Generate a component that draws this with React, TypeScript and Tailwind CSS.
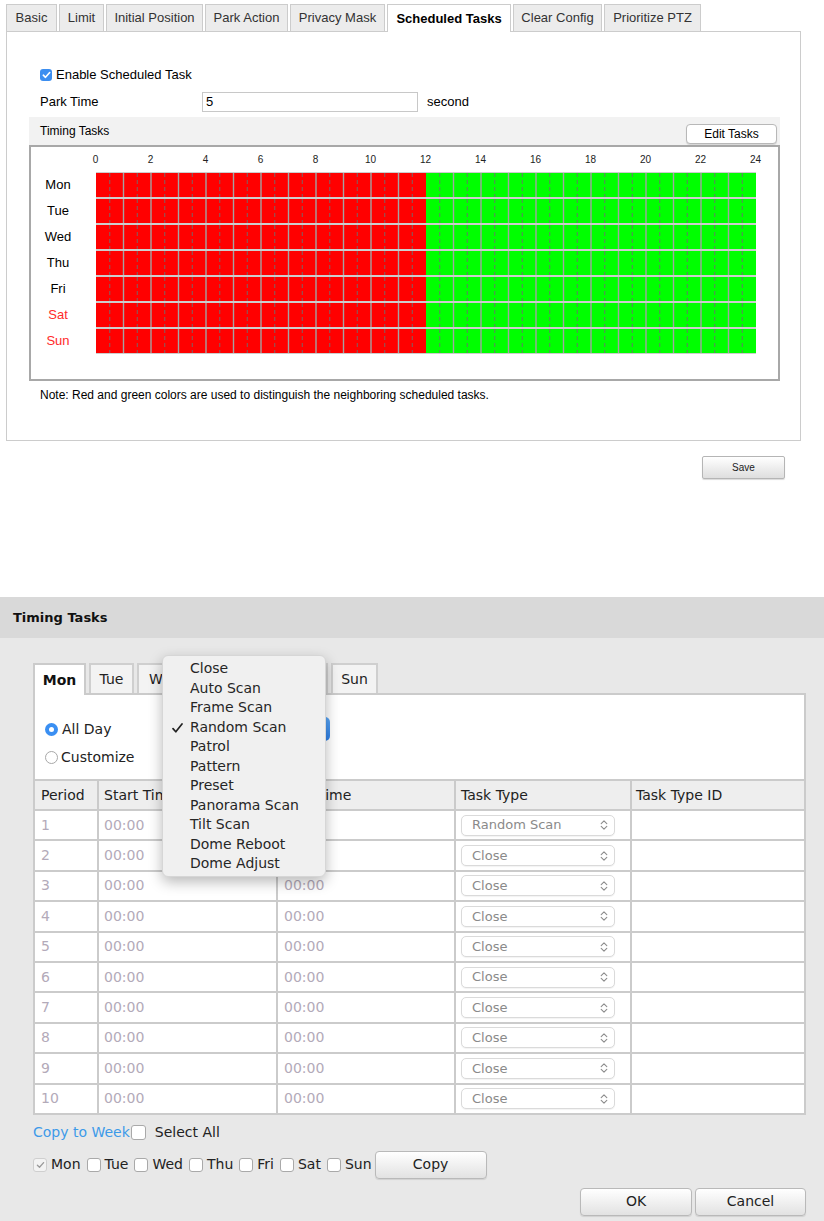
import React from "react";

const topTabs = [
  { label: "Basic", w: "w-[51px]" },
  { label: "Limit", w: "w-[45px]" },
  { label: "Initial Position", w: "w-[97px]" },
  { label: "Park Action", w: "w-[83px]" },
  { label: "Privacy Mask", w: "w-[95px]" },
  { label: "Scheduled Tasks", w: "w-[124px]", active: true },
  { label: "Clear Config", w: "w-[89px]" },
  { label: "Prioritize PTZ", w: "w-[97px]" },
];

const gridDays = [
  { d: "Mon", red: false },
  { d: "Tue", red: false },
  { d: "Wed", red: false },
  { d: "Thu", red: false },
  { d: "Fri", red: false },
  { d: "Sat", red: true },
  { d: "Sun", red: true },
];

const hours = [0, 2, 4, 6, 8, 10, 12, 14, 16, 18, 20, 22, 24];
const HW = 27.5;

function BarRow() {
  return (
    <svg width={660} height={24} className="block">
      <rect x={0} y={0} width={330} height={24} fill="#ff0000" />
      <rect x={330} y={0} width={330} height={24} fill="#00ff00" />
      {Array.from({ length: 24 }).map((_, h) => (
        <g key={h}>
          {h > 0 && h !== 12 && (
            <line x1={h * HW} x2={h * HW} y1={0} y2={24} stroke="#a3a3a3" strokeWidth={1.4} />
          )}
          <line
            x1={h * HW + HW / 2}
            x2={h * HW + HW / 2}
            y1={0}
            y2={24}
            stroke="#6e6e6e"
            strokeWidth={0.9}
            strokeDasharray="4 3"
          />
        </g>
      ))}
    </svg>
  );
}

function BlueCheck() {
  return (
    <span className="w-[12px] h-[12px] rounded-[3px] bg-[#3c8ef0] flex items-center justify-center shrink-0">
      <svg width="9" height="8" viewBox="0 0 9 8">
        <path d="M1.3 4.2 L3.5 6.3 L7.7 1.5" fill="none" stroke="#ffffff" strokeWidth="1.6" strokeLinecap="round" strokeLinejoin="round" />
      </svg>
    </span>
  );
}

function TopSection() {
  return (
    <div className="h-[597px] shrink-0 pt-[4px] pl-[6px] font-['Liberation_Sans',Arial,sans-serif] text-[13px] text-[#333]">
      <div className="flex gap-[2px] items-end relative z-10">
        {topTabs.map((t) =>
          t.active ? (
            <div
              key={t.label}
              className={`${t.w} h-[28px] mb-[-1px] bg-white border border-[#cccccc] border-b-0 flex items-center justify-center font-bold text-black`}
            >
              {t.label}
            </div>
          ) : (
            <div
              key={t.label}
              className={`${t.w} h-[27px] bg-[#ececec] border border-[#cccccc] border-b-0 flex items-center justify-center`}
            >
              {t.label}
            </div>
          )
        )}
      </div>
      <div className="w-[795px] h-[410px] border border-[#cccccc] bg-white">
        <div className="pl-[33px]">
          <div className="h-[20px] mt-[33px] flex items-center">
            <BlueCheck />
            <span className="ml-[4px] text-black">Enable Scheduled Task</span>
          </div>
          <div className="h-[20px] mt-[7px] flex items-center text-black">
            <span className="w-[162px]">Park Time</span>
            <div className="w-[216px] h-[20px] border border-[#c8c8c8] px-[3px] flex items-center bg-white">5</div>
            <span className="ml-[9px]">second</span>
          </div>
        </div>
        <div className="pl-[22px] mt-[5px]">
          <div className="w-[751px] h-[28px] bg-[#f2f2f2] flex items-center justify-between pl-[11px] pr-[3px]">
            <span className="text-black text-[12px]">Timing Tasks</span>
            <button className="w-[91px] h-[20px] mt-[5px] rounded-[4px] border border-[#b8b8b8] bg-white text-[12px] text-black shadow-[0_1px_1px_rgba(0,0,0,0.12)]">
              Edit Tasks
            </button>
          </div>
          <div className="w-[751px] h-[236px] border-2 border-[#a8a8a8] bg-white">
            <div className="ml-[55px] h-[25px]">
              <svg width={700} height={25} className="block">
                {hours.map((h) => (
                  <text
                    key={h}
                    x={10 + h * HW - 0.5}
                    y={15.5}
                    fontSize={10}
                    textAnchor="middle"
                    fill="#222"
                    fontFamily="Liberation Sans, Arial, sans-serif"
                  >
                    {h}
                  </text>
                ))}
              </svg>
            </div>
            <div className="flex">
              <div className="w-[54px] flex flex-col pt-[1px] gap-[2px]">
                {gridDays.map((g) => (
                  <div
                    key={g.d}
                    className={`h-[24px] flex items-center justify-center text-[13px] ${g.red ? "text-[#ff2a2a]" : "text-black"}`}
                  >
                    {g.d}
                  </div>
                ))}
              </div>
              <div className="ml-[11px] bg-[#cdcdcd] py-[1px] flex flex-col gap-[2px]">
                {gridDays.map((g) => (
                  <BarRow key={g.d} />
                ))}
              </div>
            </div>
          </div>
        </div>
        <div className="pl-[33px] mt-[6px] h-[16px] flex items-center text-[12px] text-black">
          Note: Red and green colors are used to distinguish the neighboring scheduled tasks.
        </div>
      </div>
      <div className="ml-[696px] mt-[15px]">
        <button className="w-[83px] h-[23px] border border-[#b5b5b5] rounded-[2px] bg-linear-to-b from-white to-[#dedede] text-[10px] text-[#222] shadow-[0_1px_1px_rgba(0,0,0,0.15)]">
          Save
        </button>
      </div>
    </div>
  );
}

const dlgTabs = [
  { d: "Mon", w: "w-[53px]", active: true },
  { d: "Tue", w: "w-[45px]" },
  { d: "W", w: "w-[46px]", left: true },
  { d: "", w: "w-[46px]" },
  { d: "", w: "w-[44px]" },
  { d: "", w: "w-[46px]" },
  { d: "Sun", w: "w-[47px]" },
];

const menuItems = [
  "Close",
  "Auto Scan",
  "Frame Scan",
  "Random Scan",
  "Patrol",
  "Pattern",
  "Preset",
  "Panorama Scan",
  "Tilt Scan",
  "Dome Reboot",
  "Dome Adjust",
];

function Chevrons() {
  return (
    <svg width="8" height="12" viewBox="0 0 8 12" className="shrink-0">
      <path d="M1.2 4.6 L4 1.8 L6.8 4.6 M1.2 7.4 L4 10.2 L6.8 7.4" fill="none" stroke="#8c8c8c" strokeWidth="1.1" strokeLinecap="round" strokeLinejoin="round" />
    </svg>
  );
}

function SmallBox({ checked }: { checked?: boolean }) {
  return (
    <span
      className={`w-[14px] h-[14px] rounded-[3px] border shrink-0 flex items-center justify-center ${
        checked ? "border-[#cfcfcf] bg-[#f3f3f3]" : "border-[#a9a9a9] bg-white"
      }`}
    >
      {checked && (
        <svg width="9" height="8" viewBox="0 0 9 8">
          <path d="M1.4 4.3 L3.5 6.3 L7.6 1.6" fill="none" stroke="#9a9a9a" strokeWidth="1.3" strokeLinecap="round" strokeLinejoin="round" />
        </svg>
      )}
    </span>
  );
}

const weekDays = ["Mon", "Tue", "Wed", "Thu", "Fri", "Sat", "Sun"];

function Dialog() {
  const rows = Array.from({ length: 10 }).map((_, i) => i + 1);
  return (
    <div className="flex-1 bg-[#e8e8e8] font-['DejaVu_Sans',sans-serif] text-[14px] text-[#222] flex flex-col">
      <div className="h-[41px] bg-[#d9d9d9] flex items-center pl-[13px] font-bold text-[13px] text-[#111]">
        Timing Tasks
      </div>
      <div className="relative flex-1 pl-[33px] pt-[25px]">
        <div className="flex gap-[3px] items-end relative z-10">
          {dlgTabs.map((t, i) =>
            t.active ? (
              <div
                key={i}
                className={`${t.w} h-[32px] mb-[-2px] bg-white border-2 border-[#cbcbcb] border-b-0 flex items-center justify-center font-bold text-[#111]`}
              >
                {t.d}
              </div>
            ) : (
              <div
                key={i}
                className={`${t.w} h-[30px] bg-[#f3f3f3] border-2 border-[#cfcfcf] border-b-0 flex items-center ${
                  t.left ? "pl-[10px]" : "justify-center"
                } text-[#222]`}
              >
                {t.d}
              </div>
            )
          )}
        </div>
        <div className="w-[773px] border-2 border-[#cbcbcb] bg-white">
          <div className="h-[84px] pt-[24px] pl-[10px]">
            <div className="h-[20px] flex items-center">
              <span className="w-[13px] h-[13px] rounded-full bg-[#3a8ff2] flex items-center justify-center shrink-0">
                <span className="w-[5px] h-[5px] rounded-full bg-white" />
              </span>
              <span className="ml-[4px] w-[50px]">All Day</span>
              <span className="ml-[138px] w-[80px] h-[24px] rounded-[5px] bg-linear-to-b from-[#5aa7f7] to-[#2d7fe6]" />
            </div>
            <div className="h-[20px] mt-[8px] flex items-center">
              <span className="w-[13px] h-[13px] rounded-full border border-[#a8a8a8] bg-white shrink-0" />
              <span className="ml-[3px]">Customize</span>
            </div>
          </div>
          <div className="grid grid-cols-[64px_179px_178px_176px_1fr] h-[30px] border-t-2 border-[#cbcbcb] bg-[#eeeeee] text-[#222]">
            <div className="border-r-2 border-[#cbcbcb] flex items-center pl-[6px]">Period</div>
            <div className="border-r-2 border-[#cbcbcb] flex items-center pl-[5px]">Start Time</div>
            <div className="border-r-2 border-[#cbcbcb] flex items-center pl-[8px]">End Time</div>
            <div className="border-r-2 border-[#cbcbcb] flex items-center pl-[5px]">Task Type</div>
            <div className="flex items-center pl-[4px]">Task Type ID</div>
          </div>
          {rows.map((r) => (
            <div
              key={r}
              className="grid grid-cols-[64px_179px_178px_176px_1fr] h-[30.4px] border-t-2 border-[#cbcbcb] text-[#b3aab9]"
            >
              <div className="border-r-2 border-[#cbcbcb] flex items-center pl-[6px]">{r}</div>
              <div className="border-r-2 border-[#cbcbcb] flex items-center pl-[5px]">00:00</div>
              <div className="border-r-2 border-[#cbcbcb] flex items-center pl-[6px]">{r > 2 ? "00:00" : ""}</div>
              <div className="border-r-2 border-[#cbcbcb] flex items-center pl-[5px]">
                <div className="w-[154px] h-[21px] rounded-[5px] border border-[#dadada] bg-white flex items-center justify-between pl-[10px] pr-[6px] text-[13px] text-[#8a8a8a] shadow-[0_1px_1px_rgba(0,0,0,0.05)]">
                  <span>{r === 1 ? "Random Scan" : "Close"}</span>
                  <Chevrons />
                </div>
              </div>
              <div />
            </div>
          ))}
        </div>
        <div className="h-[20px] mt-[8px] flex items-center">
          <span className="text-[#3d9ae8]">Copy to Week</span>
          <span className="ml-[1px] w-[15px] h-[15px] rounded-[3px] border border-[#a9a9a9] bg-white" />
          <span className="ml-[9px]">Select All</span>
        </div>
        <div className="h-[28px] mt-[8px] flex items-center">
          {weekDays.map((d, i) => (
            <div key={d} className={`flex items-center ${i === 0 ? "" : "ml-[6px]"}`}>
              <SmallBox checked={i === 0} />
              <span className="ml-[4px]">{d}</span>
            </div>
          ))}
          <button className="ml-[3px] w-[112px] h-[28px] rounded-[4px] border border-[#b9b9b9] bg-linear-to-b from-white to-[#e2e2e2] text-[14px] text-[#222] shadow-[0_1px_1px_rgba(0,0,0,0.1)]">
            Copy
          </button>
        </div>
        <div className="mt-[9px] flex justify-end pr-[18px] gap-[3px]">
          <button className="w-[112px] h-[28px] rounded-[4px] border border-[#b9b9b9] bg-linear-to-b from-white to-[#e2e2e2] text-[14px] text-[#222] shadow-[0_1px_1px_rgba(0,0,0,0.1)]">
            OK
          </button>
          <button className="w-[111px] h-[28px] rounded-[4px] border border-[#b9b9b9] bg-linear-to-b from-white to-[#e2e2e2] text-[14px] text-[#222] shadow-[0_1px_1px_rgba(0,0,0,0.1)]">
            Cancel
          </button>
        </div>

        <div className="absolute left-[162px] top-[17px] w-[164px] h-[222px] z-20 rounded-[6px] bg-[#f0f0f0] border border-[#d6d6d6] shadow-[0_5px_14px_rgba(0,0,0,0.28)] pt-[3px]">
          {menuItems.map((m) => (
            <div key={m} className="relative h-[19.5px] flex items-center pl-[27px] text-[14px] text-[#262626]">
              {m === "Random Scan" && (
                <svg width="11" height="10" viewBox="0 0 11 10" className="absolute left-[9px] top-[5px]">
                  <path d="M1 5.6 L3.8 8.8 L10 1" fill="none" stroke="#222" strokeWidth="1.7" strokeLinecap="round" strokeLinejoin="round" />
                </svg>
              )}
              {m}
            </div>
          ))}
        </div>
      </div>
    </div>
  );
}

export default function App() {
  return (
    <div className="w-[824px] h-[1221px] bg-white overflow-hidden flex flex-col">
      <TopSection />
      <Dialog />
    </div>
  );
}
